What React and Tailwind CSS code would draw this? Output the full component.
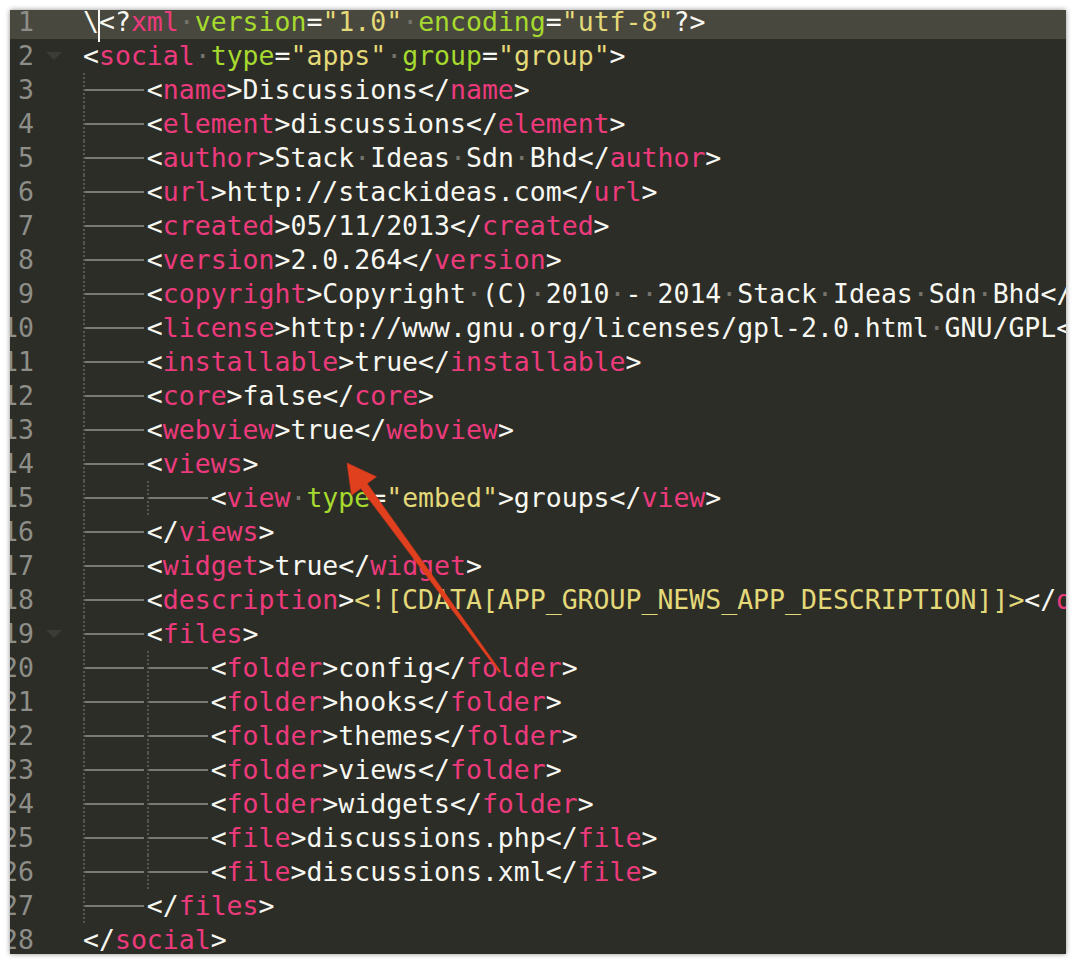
import React from "react";

const LINES = [
  '<?xml version="1.0" encoding="utf-8"?>',
  '<social type="apps" group="group">',
  "\t<name>Discussions</name>",
  "\t<element>discussions</element>",
  "\t<author>Stack Ideas Sdn Bhd</author>",
  "\t<url>http://stackideas.com</url>",
  "\t<created>05/11/2013</created>",
  "\t<version>2.0.264</version>",
  "\t<copyright>Copyright (C) 2010 - 2014 Stack Ideas Sdn Bhd</copyright>",
  "\t<license>http://www.gnu.org/licenses/gpl-2.0.html GNU/GPL</license>",
  "\t<installable>true</installable>",
  "\t<core>false</core>",
  "\t<webview>true</webview>",
  "\t<views>",
  '\t\t<view type="embed">groups</view>',
  "\t</views>",
  "\t<widget>true</widget>",
  "\t<description><![CDATA[APP_GROUP_NEWS_APP_DESCRIPTION]]></description>",
  "\t<files>",
  "\t\t<folder>config</folder>",
  "\t\t<folder>hooks</folder>",
  "\t\t<folder>themes</folder>",
  "\t\t<folder>views</folder>",
  "\t\t<folder>widgets</folder>",
  "\t\t<file>discussions.php</file>",
  "\t\t<file>discussions.xml</file>",
  "\t</files>",
  "</social>",
];

const COLORS = {
  p: "text-[#f8f8f2]",
  k: "text-[#ec3a7c]",
  a: "text-[#a6da2e]",
  s: "text-[#e4d978]",
  w: "text-[#74746c]",
};

// rough xml highlighter, good enough for this file
function tokenize(src) {
  const out = [];
  let i = 0;
  let inTag = false;
  const push = (c, s) => out.push([c, s]);
  while (i < src.length) {
    const rest = src.slice(i);
    let m;
    if (!inTag && rest.startsWith("<![CDATA[")) {
      const end = rest.indexOf("]]>");
      const stop = end < 0 ? rest.length : end + 3;
      push("s", rest.slice(0, stop));
      i += stop;
      continue;
    }
    if (!inTag && (m = rest.match(/^(<\/|<\?|<)([\w-]+)/))) {
      push("p", m[1]);
      push("k", m[2]);
      inTag = true;
      i += m[0].length;
      continue;
    }
    if (rest[0] === " ") {
      push("w", "·");
      i++;
      continue;
    }
    if (inTag) {
      if ((m = rest.match(/^(\?>|>)/))) {
        push("p", m[1]);
        inTag = false;
      } else if ((m = rest.match(/^"[^"]*"/))) {
        push("s", m[0]);
      } else if ((m = rest.match(/^[\w-]+/))) {
        push("a", m[0]);
      } else {
        m = [rest[0]];
        push("p", rest[0]);
      }
      i += m[0].length;
      continue;
    }
    m = rest.match(/^[^< ]+/) || [rest[0]];
    push("p", m[0]);
    i += m[0].length;
  }
  return out;
}

function Tab() {
  return (
    <span className="flex h-[34px] w-[4ch] shrink-0 items-center border-l-2 border-dotted border-[#56564f]">
      <span className="h-[2px] w-[59px] bg-[#7a7a72]" />
    </span>
  );
}

function Fold() {
  return (
    <span className="h-0 w-0 border-x-[8px] border-t-[8px] border-x-transparent border-t-[#3c3c35]" />
  );
}

function Row({ n, src }) {
  const tabs = src.match(/^\t*/)[0].length;
  const tokens = tokenize(src.slice(tabs));
  const first = n === 1;
  return (
    <div className={`flex h-[34px] items-center ${first ? "bg-[#49483e]" : ""}`}>
      <div className="flex w-[24px] shrink-0 justify-end text-[#8e8e88]">
        <span className="shrink-0">{n}</span>
      </div>
      <div className="flex w-[49px] shrink-0 items-center pl-[12px]">
        {(n === 2 || n === 19) && <Fold />}
      </div>
      <div className="flex items-center">
        {Array.from({ length: tabs }).map((_, i) => (
          <Tab key={i} />
        ))}
        {first && (
          <>
            <span className="text-[#f8f8f2]">\</span>
            <span className="relative inline-block w-0">
              <span className="absolute -left-px -top-[18px] h-[38px] w-[2px] bg-[#f8f8f2]" />
            </span>
          </>
        )}
        <span className="whitespace-pre">
          {tokens.map(([c, s], i) => (
            <span key={i} className={COLORS[c]}>
              {s}
            </span>
          ))}
        </span>
      </div>
    </div>
  );
}

export default function App() {
  return (
    <div className="relative h-[964px] w-[1076px] bg-white p-[10px]">
      <div className="h-[944px] w-[1056px] overflow-hidden bg-[#2d2d28] font-['DejaVu_Sans_Mono',monospace] text-[26.5px] leading-[34px] shadow-[0_0_5px_rgba(0,0,0,0.45)]">
        <div className="-mt-[5px] flex flex-col">
          {LINES.map((src, i) => (
            <Row key={i} n={i + 1} src={src} />
          ))}
        </div>
      </div>
      <svg
        className="pointer-events-none absolute inset-0"
        width="1076"
        height="964"
        viewBox="0 0 1076 964"
      >
        <polygon
          points="347,463 376.5,476.8 367.2,483.6 500.8,671.4 499.2,672.6 360.8,488.4 351.5,495.2"
          fill="#e1401f"
          stroke="#c9361b"
          strokeWidth="0.6"
          strokeLinejoin="round"
        />
      </svg>
    </div>
  );
}
